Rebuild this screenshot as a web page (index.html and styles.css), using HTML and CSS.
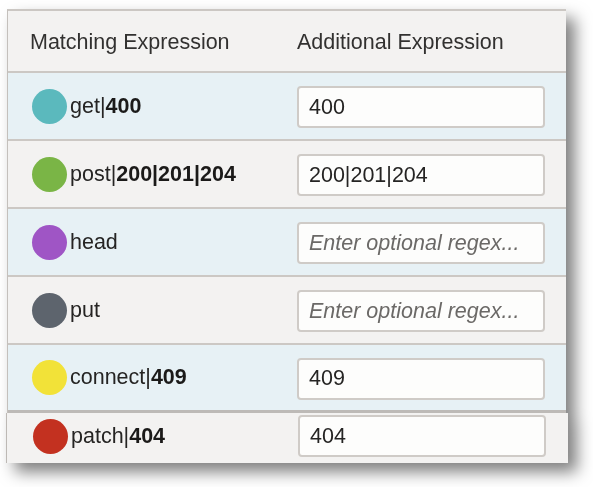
FILE: index.html
```html
<!DOCTYPE html>
<html>
<head>
<meta charset="utf-8">
<link rel="stylesheet" href="styles.css">
</head>
<body>
<div class="page">
  <div class="panel">
    <div class="row head-row">
      <div class="cell c1 hd">Matching Expression</div>
      <div class="cell c2 hd">Additional Expression</div>
    </div>
    <div class="row blue">
      <div class="cell c1"><span class="dot teal"></span><span class="lbl">get|<b>400</b></span></div>
      <div class="cell c2"><input class="inp" value="400"></div>
    </div>
    <div class="row gray">
      <div class="cell c1"><span class="dot green"></span><span class="lbl">post|<b>200|201|204</b></span></div>
      <div class="cell c2"><input class="inp" value="200|201|204"></div>
    </div>
    <div class="row blue">
      <div class="cell c1"><span class="dot purple"></span><span class="lbl">head</span></div>
      <div class="cell c2"><input class="inp" placeholder="Enter optional regex..."></div>
    </div>
    <div class="row gray">
      <div class="cell c1"><span class="dot slate"></span><span class="lbl">put</span></div>
      <div class="cell c2"><input class="inp" placeholder="Enter optional regex..."></div>
    </div>
    <div class="row blue last-blue">
      <div class="cell c1"><span class="dot yellow"></span><span class="lbl">connect|<b>409</b></span></div>
      <div class="cell c2"><input class="inp" value="409"></div>
    </div>
    <div class="row gray patch">
      <div class="cell c1"><span class="dot red"></span><span class="lbl">patch|<b>404</b></span></div>
      <div class="cell c2"><input class="inp" value="404"></div>
    </div>
  </div>
</div>
</body>
</html>
```

FILE: styles.css
```css
html, body {
  margin: 0;
  padding: 0;
  background: #ffffff;
}

body {
  min-height: 487px;
}

.page {
  padding: 9px 0 25px 7px;
  width: 559px;
}

.panel {
  width: 559px;
  border-top: 2px solid #cbc7c3;
  border-left: 1px solid #c4c0bc;
  box-sizing: border-box;
  filter: drop-shadow(9px 9px 8px rgba(0, 0, 0, 0.5));
  font-family: "Liberation Sans", Arial, sans-serif;
  font-size: 21.5px;
  color: #252423;
}

.row {
  display: grid;
  grid-template-columns: 289px 1fr;
  align-items: center;
  height: 66px;
  border-bottom: 2px solid #ccc8c4;
}

.head-row {
  height: 60px;
  background: #f3f2f1;
}

.blue {
  background: #e7f1f5;
}

.gray {
  background: #f3f2f1;
}

.last-blue {
  height: 65px;
  border-bottom: 3px solid #bdbab7;
}

.patch {
  height: 50px;
  margin-left: -2px;
  margin-right: -2px;
  padding: 1px 2px 5px 2px;
  border-bottom: none;
  border-left: 1px solid #bdb9b5;
  box-sizing: border-box;
}

.patch .inp {
  margin: 0;
}

.cell {
  display: flex;
  align-items: center;
}

.c1 {
  padding-left: 24px;
}

.c1.hd {
  padding-left: 22px;
  color: #323130;
  padding-top: 2px;
}

.c2.hd {
  color: #323130;
  padding-top: 2px;
}

.dot {
  width: 35px;
  height: 35px;
  border-radius: 50%;
  flex: none;
  margin-right: 3px;
}

.teal { background: #5bb9bd; }
.green { background: #7ab546; }
.purple { background: #9f55c5; }
.slate { background: #5d646d; }
.yellow { background: #f2e238; }
.red { background: #c33120; }

.lbl b {
  font-weight: bold;
  color: #1b1a19;
}

.inp {
  width: 248px;
  height: 42px;
  box-sizing: border-box;
  border: 2px solid #cfcbc7;
  border-radius: 4px;
  background: #fdfdfc;
  padding: 0 0 0 10px;
  margin: 2px 0 0 0;
  font-family: "Liberation Sans", Arial, sans-serif;
  font-size: 21.5px;
  color: #252423;
  outline: none;
}

.inp::placeholder {
  color: #6b6967;
  font-style: italic;
  opacity: 1;
}
```
